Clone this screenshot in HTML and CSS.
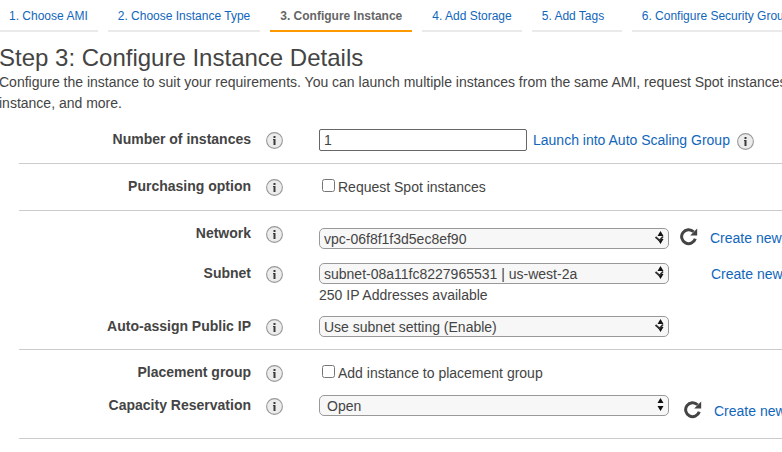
FILE: index.html
```html
<!DOCTYPE html>
<html lang="en">
<head>
<meta charset="utf-8">
<title>Step 3: Configure Instance Details</title>
<link rel="stylesheet" href="styles.css">
</head>
<body>
<svg class="sprite" aria-hidden="true">
  <symbol id="info" viewBox="0 0 17 17">
    <circle cx="8.500" cy="8.500" r="7.900" fill="#ececec" stroke="#999" stroke-width="1.100"/>
    <path d="M7.500 4h2v2h-2zM7 7h2.500v6h-2V8H7z" fill="#3a3a3a"/>
  </symbol>
  <symbol id="refresh" viewBox="0 0 18 18">
    <path d="M13.600 3.700A7 7 0 1 0 15.300 10.800" fill="none" stroke="#444" stroke-width="3"/>
    <path d="M17.200 .6v7h-7z" fill="#444"/>
  </symbol>
  <symbol id="updown" viewBox="0 0 14 16">
    <path d="M8.500 0l3 5h-6zM8.500 13l3-5h-6z" fill="#111"/>
  </symbol>
  <symbol id="updown-check" viewBox="0 0 14 16">
    <path d="M8.500 0l3 5h-6zM8.500 13l3-5h-6z" fill="#111"/>
    <path d="M3.500 6l4 3.500 3.500-4" fill="none" stroke="#333" stroke-width="1.800"/>
  </symbol>
</svg>

<nav class="steps" aria-label="Wizard steps">
  <a class="step" href="#ami">1. Choose AMI</a>
  <a class="step" href="#type">2. Choose Instance Type</a>
  <a class="step current" href="#configure" aria-current="step">3. Configure Instance</a>
  <a class="step" href="#storage">4. Add Storage</a>
  <a class="step" href="#tags">5. Add Tags</a>
  <a class="step" href="#security">6. Configure Security Group</a>
</nav>

<main>
  <h1>Step 3: Configure Instance Details</h1>
  <p class="intro">Configure the instance to suit your requirements. You can launch multiple instances from the same AMI, request Spot instances<br>instance, and more.</p>

  <form class="details">
    <section class="group">
      <div class="row">
        <label class="name" for="count">Number of instances</label>
        <button class="icon info" type="button" aria-label="About number of instances"><svg><use href="#info"/></svg></button>
        <div class="control">
          <input class="text" id="count" type="text" value="1">
          <a class="launch" href="#asg">Launch into Auto Scaling Group</a>
          <button class="icon info" type="button" aria-label="About Auto Scaling"><svg><use href="#info"/></svg></button>
        </div>
      </div>
    </section>

    <section class="group">
      <div class="row">
        <span class="name">Purchasing option</span>
        <button class="icon info" type="button" aria-label="About purchasing option"><svg><use href="#info"/></svg></button>
        <div class="control"><label class="check"><input type="checkbox">Request Spot instances</label></div>
      </div>
    </section>

    <section class="group">
      <div class="row">
        <label class="name" for="network">Network</label>
        <button class="icon info" type="button" aria-label="About network"><svg><use href="#info"/></svg></button>
        <div class="control lowered">
          <div class="select"><select id="network"><option>vpc-06f8f1f3d5ec8ef90</option></select><svg class="arrows"><use href="#updown-check"/></svg></div>
          <button class="icon refresh" type="button" aria-label="Refresh networks"><svg><use href="#refresh"/></svg></button>
          <a href="#vpc">Create new</a>
        </div>
      </div>
      <div class="row">
        <label class="name" for="subnet">Subnet</label>
        <button class="icon info" type="button" aria-label="About subnet"><svg><use href="#info"/></svg></button>
        <div>
          <div class="control">
            <div class="select"><select id="subnet"><option>subnet-08a11fc8227965531 | us-west-2a</option></select><svg class="arrows"><use href="#updown-check"/></svg></div>
            <a class="create-subnet" href="#new-subnet">Create new</a>
          </div>
          <div class="hint">250 IP Addresses available</div>
        </div>
      </div>
      <div class="row">
        <label class="name" for="public-ip">Auto-assign Public IP</label>
        <button class="icon info" type="button" aria-label="About public IP"><svg><use href="#info"/></svg></button>
        <div class="control">
          <div class="select"><select id="public-ip"><option>Use subnet setting (Enable)</option></select><svg class="arrows"><use href="#updown-check"/></svg></div>
        </div>
      </div>
    </section>

    <section class="group last">
      <div class="row">
        <span class="name">Placement group</span>
        <button class="icon info" type="button" aria-label="About placement group"><svg><use href="#info"/></svg></button>
        <div class="control"><label class="check"><input type="checkbox">Add instance to placement group</label></div>
      </div>
      <div class="row">
        <label class="name" for="capacity">Capacity Reservation</label>
        <button class="icon info" type="button" aria-label="About capacity reservation"><svg><use href="#info"/></svg></button>
        <div class="control reservation">
          <div class="select indented"><select id="capacity"><option>Open</option></select><svg class="arrows"><use href="#updown"/></svg></div>
          <div class="actions">
            <button class="icon refresh" type="button" aria-label="Refresh reservations"><svg><use href="#refresh"/></svg></button>
            <a href="#reservation">Create new</a>
          </div>
        </div>
      </div>
    </section>
  </form>
</main>
</body>
</html>
```
FILE: styles.css
```css
* { box-sizing: border-box; }

body {
  margin: 0 0 0 -1px;
  overflow: hidden;
  background: #fff;
  color: #444;
  font: 14px/20px "Liberation Sans", Arial, sans-serif;
}

a { color: #1166bb; text-decoration: none; white-space: nowrap; }

.sprite { position: absolute; width: 0; height: 0; }

.steps { display: flex; gap: 10px; }

.step {
  flex: none;
  min-width: 90px;
  padding: 6px 10px 4px;
  border-bottom: 2px solid #eaeaea;
  font-size: 12px;
}

.step.current { border-color: #f90; color: #666; font-weight: bold; }

h1 {
  margin: 12px 0 0;
  color: #444;
  font-size: 24px;
  font-weight: normal;
  line-height: 28px;
}

.intro { margin: 0; line-height: 21px; white-space: nowrap; }

.details { margin: 3px 0 0 20px; }

.group {
  display: grid;
  gap: 10px;
  padding: 12px 0;
  border-bottom: 1px solid #ccc;
}

.group.last { gap: 11px; padding-bottom: 22px; }

.row {
  display: grid;
  grid-template-columns: 232px 17px 1fr;
  column-gap: 15px;
  align-items: start;
}

.row > :last-child { margin-left: 21px; }

.name { font-weight: bold; text-align: right; }

.icon {
  flex: none;
  padding: 0;
  border: 0;
  background: none;
}

.icon svg { display: block; width: 100%; height: 100%; }

.info { width: 17px; height: 17px; }

.row > .info { margin-top: 3px; }

.refresh { width: 18px; height: 18px; margin: 0 12px 0 11px; }

.control { display: flex; align-items: center; }

.control .info { margin: 3px 0 0 7px; }

.lowered { align-items: start; padding: 5px 0 4px; }

.text {
  width: 208px;
  height: 22px;
  padding: 0 4px;
  border: 1px solid #666;
  border-radius: 2px;
  color: #444;
  font: inherit;
}

.launch { margin-left: 6px; }

.check { display: flex; padding-top: 1px; line-height: 21px; }

.check input { width: 13px; height: 13px; margin: 2px 3px 0 3px; }

.select { position: relative; width: 350px; }

.select select {
  display: block;
  width: 100%;
  height: 21px;
  padding: 0 24px 1px 4px;
  border: 1px solid #999;
  border-radius: 5px;
  appearance: none;
  background: #f7f7f7;
  color: #444;
  font: inherit;
}

.select.indented select { padding-left: 7px; }

.arrows {
  position: absolute;
  top: 3px;
  right: 3px;
  width: 14px;
  height: 16px;
  pointer-events: none;
}

.create-subnet { margin-left: 42px; }

.hint { line-height: 22px; }

.reservation { align-items: start; }

.actions { display: flex; margin-bottom: -5px; padding: 6px 0 0 4px; }
```
